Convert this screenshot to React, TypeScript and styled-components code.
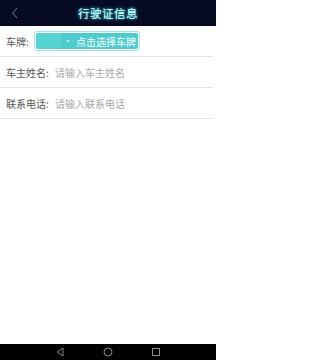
import React from "react";
import styled, { createGlobalStyle } from "styled-components";

const GlobalStyle = createGlobalStyle`
  html, body {
    margin: 0;
    padding: 0;
    background: #ffffff;
  }
  body {
    font-family: "Noto Sans CJK SC", "Noto Sans", sans-serif;
  }
`;

const Screen = styled.div`
  width: 216px;
  height: 360px;
  display: flex;
  flex-direction: column;
  background: #ffffff;
  overflow: hidden;
`;

const Header = styled.div`
  height: 26px;
  flex: none;
  background: #060a22;
  display: grid;
  grid-template-columns: 30px 1fr 30px;
  align-items: center;
`;

const BackButton = styled.div`
  display: flex;
  align-items: center;
  justify-content: center;
  height: 100%;
`;

const Title = styled.h1`
  margin: 0;
  text-align: center;
  font-size: 11.5px;
  font-weight: 400;
  letter-spacing: 0.5px;
  color: #d8fbfb;
  text-shadow: 0 0 2px #3fd6e0, 0 0 4px #29b9c9;
`;

const Form = styled.div`
  display: flex;
  flex-direction: column;
  flex: 1;
`;

const Row = styled.div`
  height: 30px;
  display: flex;
  align-items: center;
  padding-left: 6px;
  border-bottom: 1.5px solid #e6e6e6;
  margin-right: 3px;
  font-size: 10px;
  white-space: nowrap;
`;

const Label = styled.span<{ $w: number }>`
  width: ${(p) => p.$w}px;
  color: #555555;
  flex: none;
`;

const Placeholder = styled.span`
  color: #a8a8a8;
`;

const Select = styled.div`
  height: 20px;
  width: 106px;
  flex: none;
  border: 1px solid #9fe2e4;
  border-radius: 3px;
  padding: 1px;
  box-sizing: border-box;
  display: flex;
  margin-left: 1px;
`;

const SelectInner = styled.div`
  flex: 1;
  border-radius: 2px;
  background: #4ccccd;
  display: flex;
  align-items: center;
  overflow: hidden;
`;

const Province = styled.div`
  width: 25px;
  flex: none;
  height: 100%;
  background: #55d3d3;
  border-radius: 2px 0 0 2px;
`;

const Arrow = styled.div`
  width: 0;
  height: 0;
  flex: none;
  margin: 0 6px 0 5px;
  border-left: 2.5px solid transparent;
  border-right: 2.5px solid transparent;
  border-top: 3px solid #a5e6e8;
`;

const SelectText = styled.span`
  color: #ffffff;
  font-size: 10px;
  white-space: nowrap;
  flex: none;
`;

const NavBar = styled.div`
  height: 16px;
  flex: none;
  background: #000000;
  display: flex;
  align-items: center;
  justify-content: center;
  gap: 38px;
`;

const NavIcon = styled.svg`
  width: 10px;
  height: 10px;
  display: block;
`;

export default function App() {
  return (
    <Screen>
      <GlobalStyle />
      <Header>
        <BackButton>
          <svg width="8" height="12" viewBox="0 0 8 12">
            <path d="M6 1 L1.5 6 L6 11" fill="none" stroke="#8a8d9c" strokeWidth="0.9" />
          </svg>
        </BackButton>
        <Title>行驶证信息</Title>
        <div />
      </Header>
      <Form>
        <Row>
          <Label $w={27}>车牌:</Label>
          <Select>
            <SelectInner>
              <Province />
              <Arrow />
              <SelectText>点击选择车牌</SelectText>
            </SelectInner>
          </Select>
        </Row>
        <Row>
          <Label $w={49}>车主姓名:</Label>
          <Placeholder>请输入车主姓名</Placeholder>
        </Row>
        <Row>
          <Label $w={49}>联系电话:</Label>
          <Placeholder>请输入联系电话</Placeholder>
        </Row>
      </Form>
      <NavBar>
        <NavIcon viewBox="0 0 10 10">
          <path d="M8 1 L2 5 L8 9 Z" fill="none" stroke="#9a9a9a" strokeWidth="0.9" />
        </NavIcon>
        <NavIcon viewBox="0 0 10 10">
          <circle cx="5" cy="5" r="4" fill="none" stroke="#9a9a9a" strokeWidth="0.9" />
        </NavIcon>
        <NavIcon viewBox="0 0 10 10">
          <rect x="1.5" y="1.5" width="7" height="7" fill="none" stroke="#9a9a9a" strokeWidth="0.9" />
        </NavIcon>
      </NavBar>
    </Screen>
  );
}
